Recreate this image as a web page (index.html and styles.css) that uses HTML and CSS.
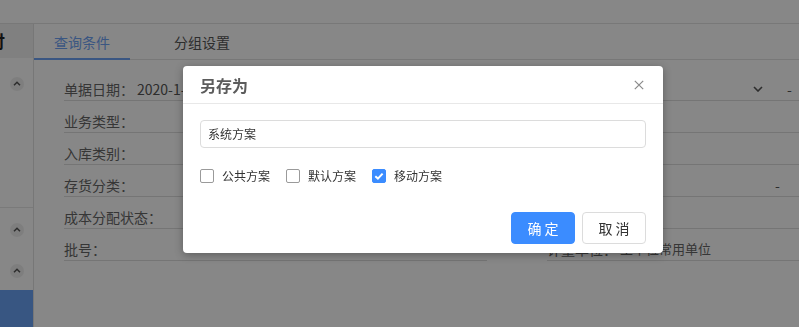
FILE: index.html
```html
<!DOCTYPE html>
<html lang="zh-CN">
<head>
<meta charset="utf-8">
<title>另存为</title>
<link rel="stylesheet" href="styles.css">
</head>
<body>
<div class="app">
  <header class="topbar"></header>
  <div class="main">
    <aside class="side">
      <div class="side-head"><span class="side-title">应付</span></div>
      <div class="side-group first">
        <span class="circle"><svg width="8" height="5" viewBox="0 0 8 5"><path d="M1 4.3L4 1.3L7 4.3" stroke="#555" stroke-width="1.5" fill="none"/></svg></span>
      </div>
      <div class="side-group second">
        <span class="circle"><svg width="8" height="5" viewBox="0 0 8 5"><path d="M1 4.3L4 1.3L7 4.3" stroke="#555" stroke-width="1.5" fill="none"/></svg></span>
        <span class="circle"><svg width="8" height="5" viewBox="0 0 8 5"><path d="M1 4.3L4 1.3L7 4.3" stroke="#555" stroke-width="1.5" fill="none"/></svg></span>
      </div>
      <div class="side-active"></div>
    </aside>
    <section class="content">
      <nav class="tabs">
        <a class="tab active">查询条件</a>
        <a class="tab">分组设置</a>
      </nav>
      <div class="form">
        <div class="col">
          <div class="row"><span class="label">单据日期：</span><span class="value">2020-1-1</span></div>
          <div class="row"><span class="label">业务类型：</span></div>
          <div class="row"><span class="label">入库类别：</span></div>
          <div class="row"><span class="label">存货分类：</span></div>
          <div class="row"><span class="label wide">成本分配状态：</span></div>
          <div class="row"><span class="label">批号：</span></div>
        </div>
        <div class="col">
          <div class="row"><span class="box"><svg class="chev" width="10" height="6" viewBox="0 0 10 6"><path d="M1 1L5 5L9 1" stroke="#555" stroke-width="1.6" fill="none"/></svg></span><span class="dash">-</span></div>
          <div class="row"></div>
          <div class="row"></div>
          <div class="row"><span class="box short"></span><span class="dash">-</span></div>
          <div class="row"></div>
          <div class="row"><span class="label">计量单位：</span><span class="opt">主单位</span><span class="opt">常用单位</span></div>
        </div>
      </div>
    </section>
  </div>
</div>
<div class="mask"></div>
<div class="dialog">
  <div class="dialog-head">
    <span class="dialog-title">另存为</span>
    <svg class="close" width="10" height="10" viewBox="0 0 10 10"><path d="M0.8 0.8L9.2 9.2M9.2 0.8L0.8 9.2" stroke="#8a8a8a" stroke-width="1.2"/></svg>
  </div>
  <div class="dialog-body">
    <div class="input">系统方案</div>
    <div class="checks">
      <label class="check"><span class="cb"></span>公共方案</label>
      <label class="check"><span class="cb"></span>默认方案</label>
      <label class="check"><span class="cb on"><svg width="14" height="14" viewBox="0 0 14 14"><path d="M3.3 7.2L5.9 9.6L10.6 4.6" stroke="#fff" stroke-width="2" fill="none"/></svg></span>移动方案</label>
    </div>
    <div class="footer">
      <button class="btn primary">确 定</button>
      <button class="btn">取 消</button>
    </div>
  </div>
</div>
</body>
</html>
```
FILE: styles.css
```css
* { box-sizing: border-box; }
html, body {
  margin: 0;
  width: 799px;
  height: 327px;
  overflow: hidden;
  background: #fff;
  font-family: "Noto Sans CJK SC", "Noto Sans", sans-serif;
  color: #333;
}
.app { width: 799px; height: 327px; display: flex; flex-direction: column; }
.topbar { height: 24px; border-bottom: 1px solid #e3e3e3; flex: none; }
.main { flex: 1; display: flex; min-height: 0; }
.side {
  width: 34px;
  flex: none;
  border-right: 1px solid #e0e0e0;
  display: flex;
  flex-direction: column;
  overflow: hidden;
}
.side-head {
  height: 36px;
  background: #f2f2f2;
  display: flex;
  align-items: center;
  overflow: hidden;
}
.side-title {
  font-size: 17px;
  font-weight: bold;
  color: #222;
  margin-left: -29px;
  white-space: nowrap;
}
.side-group { display: flex; flex-direction: column; align-items: center; gap: 27px; padding-left: 1px; }
.side-group.first { height: 160px; border-bottom: 1px solid #e6e6e6; padding-top: 19px; }
.side-group.second { padding: 15px 0 12px 1px; }
.circle {
  width: 14px; height: 14px; border-radius: 50%;
  background: #efefef;
  display: flex; align-items: center; justify-content: center;
}
.side-active { height: 40px; background: #6aa3f5; }

.content { flex: 1; min-width: 0; overflow: hidden; }
.tabs { height: 36px; border-bottom: 1px solid #e3e3e3; display: flex; }
.tab {
  padding: 0 20px;
  font-size: 14px;
  line-height: 37px;
  color: #555;
  white-space: nowrap;
}
.tab + .tab { margin-left: 24px; }
.tab.active { color: #6fa3f5; border-bottom: 2px solid #6fa3f5; margin-bottom: -1px; }

.form {
  display: grid;
  grid-template-columns: 423px 423px;
  column-gap: 60px;
  padding: 9px 0 0 30px;
}
.row {
  height: 32px;
  padding-top: 9px;
  border-bottom: 1px solid #dedede;
  display: flex;
  align-items: center;
  font-size: 14px;
  line-height: 20px;
  color: #666;
  white-space: nowrap;
}
.label { width: 73px; flex: none; }
.label.wide { width: 120px; }
.value { color: #555; }
.box { width: 220px; display: flex; align-items: center; justify-content: flex-end; color: #555; }
.box.short { width: 228px; }
.chev { margin-right: 4px; }
.dash { margin-left: 20px; color: #555; }
.box.short + .dash { margin-left: 0; }
.opt { font-size: 13px; }

.mask { position: fixed; inset: 0; background: rgba(0, 0, 0, 0.47); }

.dialog {
  position: absolute;
  left: 183px;
  top: 66px;
  width: 480px;
  height: 187px;
  background: #fff;
  border-radius: 4px;
  box-shadow: 0 2px 8px rgba(0, 0, 0, 0.3);
}
.dialog-head {
  height: 38px;
  padding: 0 19px 0 17px;
  border-bottom: 1px solid #e8e8e8;
  display: flex;
  align-items: center;
  justify-content: space-between;
}
.dialog-title { font-size: 16px; font-weight: bold; color: #5c5c5c; line-height: 20px; }
.dialog-body { padding: 16px 17px 0; }
.input {
  height: 28px;
  border: 1px solid #dcdcdc;
  border-radius: 4px;
  padding-left: 7px;
  font-size: 12px;
  line-height: 26px;
  color: #333;
}
.checks { margin-top: 21px; display: flex; gap: 16px; height: 14px; align-items: center; }
.check { display: flex; align-items: center; gap: 8px; font-size: 12px; color: #333; line-height: 14px; }
.cb {
  width: 14px; height: 14px;
  border: 1px solid #9a9a9a;
  border-radius: 2px;
  background: #fff;
  display: flex;
}
.cb.on { background: #3b8cff; border-color: #3b8cff; }
.cb.on svg { margin: -1px; }
.footer { margin-top: 29px; display: flex; justify-content: flex-end; gap: 7px; }
.btn {
  width: 64px; height: 32px;
  border: 1px solid #dcdcdc;
  border-radius: 4px;
  background: #fff;
  font-family: inherit;
  font-size: 14px;
  color: #333;
  padding: 0;
}
.btn.primary { background: #3b8cff; border-color: #3b8cff; color: #fff; }
```
